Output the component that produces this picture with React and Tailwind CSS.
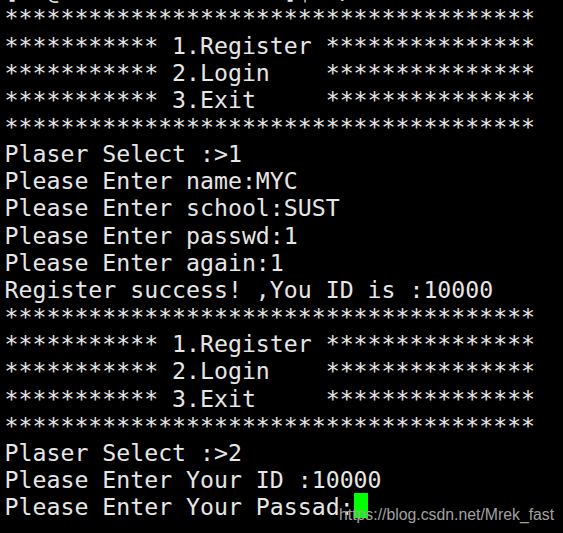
import React from "react";

const stars = "**************************************";
const menu = [
  "*********** 1.Register ***************",
  "*********** 2.Login    ***************",
  "*********** 3.Exit     ***************",
];

const lines = [
  "[mc@localhost client]$ ./a.out",
  stars,
  ...menu,
  stars,
  "Plaser Select :>1",
  "Please Enter name:MYC",
  "Please Enter school:SUST",
  "Please Enter passwd:1",
  "Please Enter again:1",
  "Register success! ,You ID is :10000",
  stars,
  ...menu,
  stars,
  "Plaser Select :>2",
  "Please Enter Your ID :10000",
];

export default function App() {
  return (
    <div className="relative w-[563px] h-[533px] bg-black overflow-hidden">
      <div
        className="mt-[-22.8px] pl-[4.6px] text-[23.2px] leading-[27.15px] text-[#e6e6e6] whitespace-pre"
        style={{ fontFamily: '"DejaVu Sans Mono", monospace' }}
      >
        {lines.map((l, i) => (
          <div key={i}>{l}</div>
        ))}
        <div>
          Please Enter Your Passad:
          <span className="inline-block align-top w-[14px] h-[25px] bg-[#00ff00]"></span>
        </div>
      </div>
      <div
        className="absolute left-[339px] top-[505.5px] text-[15.8px] leading-[18px] text-[#a0a0a0]"
        style={{ fontFamily: '"Liberation Sans", Arial, sans-serif' }}
      >
        https://blog.csdn.net/Mrek_fast
      </div>
    </div>
  );
}
